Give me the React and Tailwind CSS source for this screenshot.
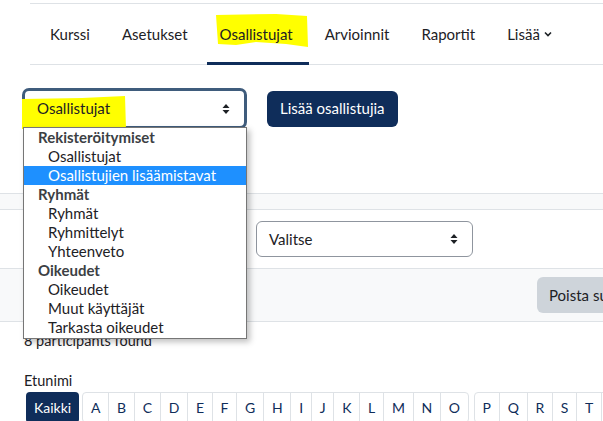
import React from "react";

const navItems = ["Kurssi", "Asetukset", "Osallistujat", "Arvioinnit", "Raportit"];
const letters1 = ["A","B","C","D","E","F","G","H","I","J","K","L","M","N","O"];
const letters2 = ["P","Q","R","S","T","U","V","W","X","Y","Z"];

function Updown({ className = "" }) {
  return (
    <svg width="8" height="12" viewBox="0 0 8 12" className={className}>
      <path d="M4 1 L7.5 5 H0.5 Z" fill="#1d2125" />
      <path d="M4 11 L7.5 7 H0.5 Z" fill="#1d2125" />
    </svg>
  );
}

export default function App() {
  return (
    <div className="relative w-[603px] h-[421px] overflow-hidden bg-white text-[#1d2125] font-['Lato','Noto_Sans',sans-serif]">
      {/* Secondary nav */}
      <div className="pt-[3px] pl-[30px]">
        <div className="flex h-[62px] w-[700px] items-stretch border-t border-b border-[#dee2e6] pl-[4px]">
          {navItems.map((n) => (
            <div key={n} className="relative flex items-center px-4 text-[15px]">
              {n === "Osallistujat" ? (
                <>
                  <span className="relative">
                    <svg className="absolute left-[-4px] top-[-9px]" width="92" height="34" viewBox="0 0 92 34">
                      <path d="M0 1 L60 0 L91 2 L92 33 L70 30 L40 28 L20 31 L2 30 Z" fill="#ffff00" />
                    </svg>
                    <span className="relative">{n}</span>
                  </span>
                  <span className="absolute bottom-[-1px] left-[3px] right-0 h-[3px] bg-[#0f2d5a]" />
                </>
              ) : (
                <span>{n}</span>
              )}
            </div>
          ))}
          <div className="flex items-center gap-1 px-4 text-[15px]">
            <span>Lisää</span>
            <svg width="8" height="6" viewBox="0 0 8 6"><path d="M1 1.5 L4 4.5 L7 1.5" stroke="#1d2125" strokeWidth="1.6" fill="none" /></svg>
          </div>
        </div>
      </div>

      {/* Select + button row */}
      <div className="flex items-center gap-[20px] pl-[22px] pt-[23px]">
        <div className="relative flex h-[41px] w-[225px] items-center justify-between rounded-[7px] border-[3px] border-[#3f5c7c] pl-[12px] pr-[14px] text-[15px]">
          <svg className="absolute left-[-3px] top-[5px]" width="104" height="34" viewBox="0 0 104 34">
            <path d="M0 3 L60 2 L103 0 L104 33 L60 34 L0 33 Z" fill="#ffff00" />
          </svg>
          <span className="relative">Osallistujat</span>
          <Updown />
        </div>
        <button className="h-[36px] rounded-[6px] bg-[#0f2d5a] px-[13px] text-[15px] text-white">Lisää osallistujia</button>
      </div>

      {/* Filter panel */}
      <div className="mt-[64px] ml-[0px] w-[700px]">
        <div className="h-[17px] border-t border-b border-[#dee2e6] bg-[#f8f9fa]" />
        <div className="flex h-[58px] items-center gap-[10px] bg-white pl-[24px]">
          <div className="h-[36px] w-[222px] rounded-[6px] border border-[#8f959e] bg-white" />
          <div className="flex h-[36px] w-[217px] items-center justify-between rounded-[6px] border border-[#8f959e] bg-white pl-[12px] pr-[14px] text-[15px]">
            <span>Valitse</span>
            <Updown />
          </div>
        </div>
        <div className="flex h-[54px] items-center border-t border-b border-[#dee2e6] bg-[#f8f9fa] pl-[537px]">
          <div className="flex h-[36px] items-center rounded-[6px] bg-[#ced4da] px-[12px] text-[15px] whitespace-nowrap">Poista suodattimet</div>
        </div>
      </div>

      <div className="pl-[24px] pt-[9px] text-[14.5px] leading-[20px]">8 participants found</div>
      <div className="pl-[24px] pt-[20px] text-[14.5px] leading-[20px]">Etunimi</div>
      <div className="flex pl-[26px] pt-[1px] text-[14px]">
        <div className="flex h-[31px] items-center rounded-[4px] bg-[#0f2d5a] px-[8px] text-white">Kaikki</div>
        <div className="ml-[3px] flex h-[31px] rounded-[4px] border border-[#dee2e6]">
          {letters1.map((l, i) => (
            <div key={l} className={`flex items-center px-[7.8px] text-[#0f2d5a] ${i > 0 ? "border-l border-[#dee2e6]" : ""}`}>{l}</div>
          ))}
        </div>
        <div className="ml-[5px] flex h-[31px] rounded-[4px] border border-[#dee2e6]">
          {letters2.map((l, i) => (
            <div key={l} className={`flex items-center px-[7.8px] text-[#0f2d5a] ${i > 0 ? "border-l border-[#dee2e6]" : ""}`}>{l}</div>
          ))}
        </div>
      </div>

      {/* Open dropdown list */}
      <div className="absolute left-[23px] top-[127px] w-[224px] border border-[#767676] bg-white pb-[1px] text-[15px] leading-[19px] shadow-[3px_3px_6px_rgba(0,0,0,0.25)]">
        <div className="pl-[14px] font-bold text-[#3c3f44]">Rekisteröitymiset</div>
        <div className="pl-[24px]">Osallistujat</div>
        <div className="bg-[#1e90ff] pl-[24px] text-white">Osallistujien lisäämistavat</div>
        <div className="pl-[14px] font-bold text-[#3c3f44]">Ryhmät</div>
        <div className="pl-[24px]">Ryhmät</div>
        <div className="pl-[24px]">Ryhmittelyt</div>
        <div className="pl-[24px]">Yhteenveto</div>
        <div className="pl-[14px] font-bold text-[#3c3f44]">Oikeudet</div>
        <div className="pl-[24px]">Oikeudet</div>
        <div className="pl-[24px]">Muut käyttäjät</div>
        <div className="pl-[24px]">Tarkasta oikeudet</div>
      </div>
    </div>
  );
}
